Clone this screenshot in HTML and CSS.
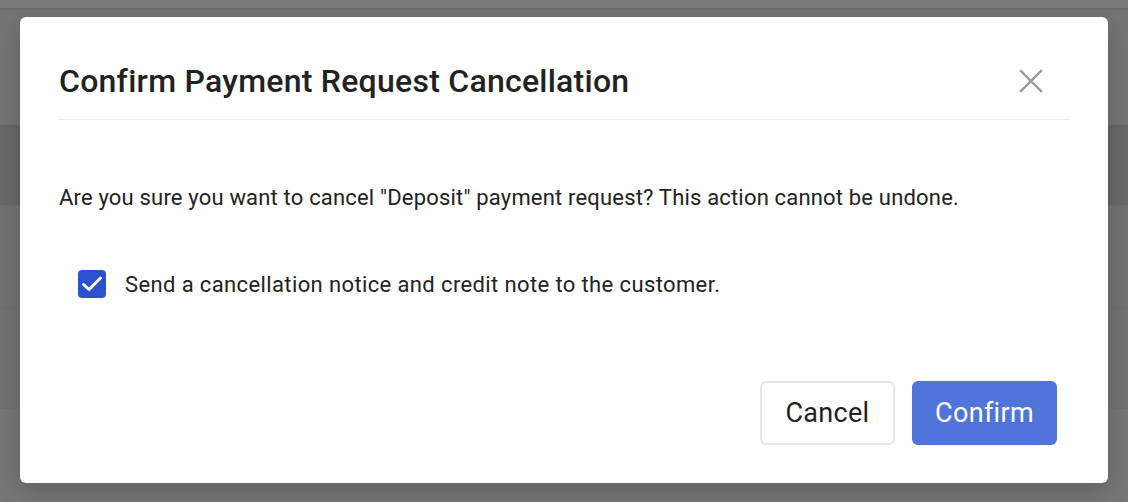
FILE: index.html
```html
<!DOCTYPE html>
<html lang="en">
<head>
<meta charset="utf-8">
<title>Confirm Payment Request Cancellation</title>
<link rel="stylesheet" href="styles.css">
</head>
<body>
<div class="page">
  <div class="bg-top"></div>
  <div class="bg-row"></div>
  <div class="bg-band"></div>
  <div class="bg-row tall"></div>
  <div class="bg-row tall"></div>
</div>
<div class="overlay">
  <div class="modal" role="dialog" aria-labelledby="modal-title">
    <div class="modal-header">
      <h2 id="modal-title" class="modal-title">Confirm Payment Request Cancellation</h2>
      <button class="close-btn" aria-label="Close">
        <svg width="24" height="24" viewBox="0 0 24 24" aria-hidden="true">
          <path d="M2 2 L22 22 M22 2 L2 22" stroke="#9a9a9a" stroke-width="2.4" stroke-linecap="square" fill="none"/>
        </svg>
      </button>
    </div>
    <div class="modal-body">
      <p class="message">Are you sure you want to cancel "Deposit" payment request? This action cannot be undone.</p>
      <label class="check-row">
        <span class="checkbox">
          <svg width="22" height="18" viewBox="0 0 22 18" aria-hidden="true">
            <path d="M2.5 9.5 L8 14.5 L19.5 3" stroke="#fff" stroke-width="3" stroke-linecap="round" stroke-linejoin="round" fill="none"/>
          </svg>
        </span>
        <span class="check-label">Send a cancellation notice and credit note to the customer.</span>
      </label>
    </div>
    <div class="modal-footer">
      <button class="btn btn-secondary">Cancel</button>
      <button class="btn btn-primary">Confirm</button>
    </div>
  </div>
</div>
</body>
</html>
```

FILE: styles.css
```css
* { box-sizing: border-box; }
html, body {
  margin: 0;
  padding: 0;
  width: 1128px;
  height: 502px;
  overflow: hidden;
  font-family: Roboto, "Liberation Sans", Arial, sans-serif;
}
body { position: relative; background: #767676; }

.page {
  display: flex;
  flex-direction: column;
  height: 502px;
}
.bg-top {
  height: 10px;
  background: #7a7a7a;
  border-bottom: 2px solid #6c6c6c;
}
.bg-row {
  height: 115px;
  background: #747474;
}
.bg-band {
  height: 80px;
  background: #686868;
}
.bg-row.tall {
  height: 102px;
  border-top: 1px solid #6d6d6d;
  background: #717171;
}

.overlay {
  position: absolute;
  inset: 0;
  padding: 17px 20px 0 20px;
}

.modal {
  width: 1088px;
  height: 466px;
  background: #fff;
  border-radius: 6px;
  padding: 0 38px 0 38px;
  display: flex;
  flex-direction: column;
  box-shadow: 0 8px 24px rgba(0,0,0,0.18);
}

.modal-header {
  display: flex;
  align-items: center;
  justify-content: space-between;
  height: 103px;
  padding: 25px 0 0 1px;
  border-bottom: 1px solid #ececec;
}
.modal-title {
  margin: 0;
  font-size: 32px;
  font-weight: 500;
  color: #222;
  letter-spacing: 0.25px;
}
.close-btn {
  border: 0;
  background: none;
  padding: 0;
  margin-right: 27px;
  width: 24px;
  height: 24px;
  cursor: pointer;
}
.close-btn svg { display: block; }

.modal-body {
  padding: 64px 0 0 1px;
}
.message {
  margin: 0;
  font-size: 22px;
  line-height: 28px;
  letter-spacing: 0.18px;
  color: #222;
}
.check-row {
  display: flex;
  align-items: center;
  gap: 19px;
  margin-top: 58px;
  padding-left: 19px;
}
.checkbox {
  width: 28px;
  height: 28px;
  border-radius: 4px;
  background: #2c51cf;
  display: flex;
  align-items: center;
  justify-content: center;
}
.checkbox svg { display: block; }
.check-label {
  font-size: 22px;
  letter-spacing: 0.38px;
  color: #222;
}

.modal-footer {
  margin-top: auto;
  display: flex;
  justify-content: flex-end;
  gap: 17px;
  padding: 0 13px 38px 0;
}
.btn {
  height: 64px;
  border-radius: 6px;
  font-family: Roboto, "Liberation Sans", Arial, sans-serif;
  font-size: 27px;
  letter-spacing: 0.3px;
  padding: 0;
  cursor: pointer;
}
.btn-secondary {
  background: #fff;
  color: #222;
  border: 2px solid #e6e6e6;
  width: 135px;
}
.btn-primary {
  background: #5074d9;
  color: #fff;
  border: 0;
  width: 145px;
}
```
